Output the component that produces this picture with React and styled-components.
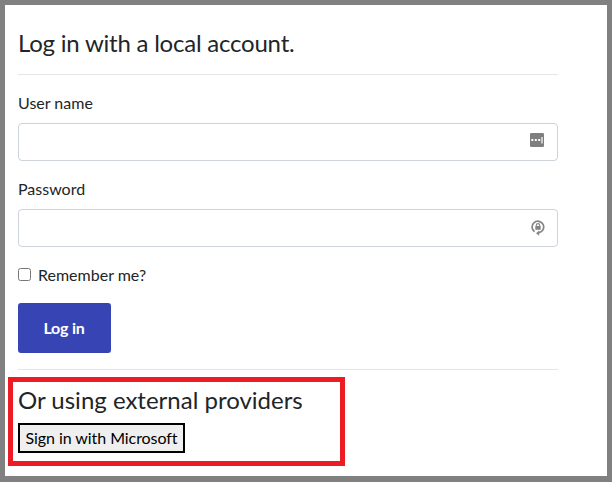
import React from 'react';
import styled, { createGlobalStyle } from 'styled-components';

const Global = createGlobalStyle`
  *, *::before, *::after { box-sizing: border-box; }
  body { margin: 0; background: #fff; font-family: Lato, sans-serif; font-size: 16px; line-height: 24px; color: #212529; }
`;
const Page = styled.main`
  width: 612px; height: 482px; border: 5px solid #808080; border-bottom-width: 6px; background: #fff;
  padding: 23px 0 0 13px; overflow: hidden;
`;
const Form = styled.form`width: 540px; display: flex; flex-direction: column;`;
const Title = styled.h4`
  margin: 0; font-size: 24px; line-height: 29px; font-weight: 400;
  letter-spacing: ${({ $tracking = 0 }) => $tracking}px;
`;
const Rule = styled.hr`width: 100%; height: 1px; border: 0; margin: ${({ $top = 16 }) => $top}px 0 16px; background: #e5e5e5;`;
const Field = styled.div`display: flex; flex-direction: column; margin-bottom: 16px;`;
const Label = styled.label`line-height: 24px; margin-bottom: 8px;`;
const InputBox = styled.div`
  height: 38px; border: 1px solid #ced4da; border-radius: 4px; display: flex; align-items: center; padding-right: 13px;
`;
const Input = styled.input`flex: 1; border: 0; outline: 0; background: transparent; font: inherit;`;
const DotsIcon = styled.svg`width: 14px; height: 14px; margin-bottom: 4px;`;
const LockIcon = styled.svg`width: 14px; height: 16px; margin-right: -1px;`;
const Remember = styled.label`display: flex; align-items: center; gap: 7px; height: 24px; margin-bottom: 16px;`;
const Check = styled.input`width: 13px; height: 13px; margin: 0 0 2px;`;
const Submit = styled.button`
  width: 93px; height: 50px; border: 0; border-radius: 3px; background: #3644b4; color: #fff;
  font: 700 16px/24px Lato, sans-serif; letter-spacing: -0.2px; padding: 0 1px 0 0;
`;
const Providers = styled.section`
  width: 337px; height: 89px; border: 5px solid #ed1c24; margin: -9px 0 0 -10px; padding: 3px 5px;
`;
const Provider = styled.button`
  width: 167px; height: 30px; margin-top: 9px; padding: 0; border: 2px solid #000; background: #efefef;
  font: 400 16px/24px Lato, sans-serif; letter-spacing: -0.06px; color: #000;
`;

export default function App() {
  return (
    <Page>
      <Global />
      <Form>
        <Title $tracking={-0.22}>Log in with a local account.</Title>
        <Rule $top={17} />
        <Field>
          <Label>User name</Label>
          <InputBox>
            <Input />
            <DotsIcon viewBox="0 0 14 14">
              <rect width="14" height="14" rx="1.3" fill="#7f7f7f" />
              <path d="M1.3 6h2v2h-2zM4.8 6h2v2h-2zM8.2 6h2v2h-2zM11.4 4h1.2v6.4h-1.2z" fill="#fff" />
            </DotsIcon>
          </InputBox>
        </Field>
        <Field>
          <Label>Password</Label>
          <InputBox>
            <Input type="password" />
            <LockIcon viewBox="0 0 14 16">
              <path d="M3.6 11.8A5.8 5.8 0 1 1 8 12.7" fill="none" stroke="#858585" strokeWidth="1.7" />
              <path d="M8.2 10.6v5.2L5 13.2z" fill="#858585" />
              <path d="M5.3 6.4V5.3a1.7 1.7 0 0 1 3.4 0v1.1" fill="none" stroke="#858585" strokeWidth="1.1" />
              <rect x="4.3" y="5.9" width="5.4" height="3.9" rx=".4" fill="#858585" />
            </LockIcon>
          </InputBox>
        </Field>
        <Remember><Check type="checkbox" />Remember me?</Remember>
        <Submit type="button">Log in</Submit>
        <Rule />
      </Form>
      <Providers>
        <Title>Or using external providers</Title>
        <Provider type="button">Sign in with Microsoft</Provider>
      </Providers>
    </Page>
  );
}
